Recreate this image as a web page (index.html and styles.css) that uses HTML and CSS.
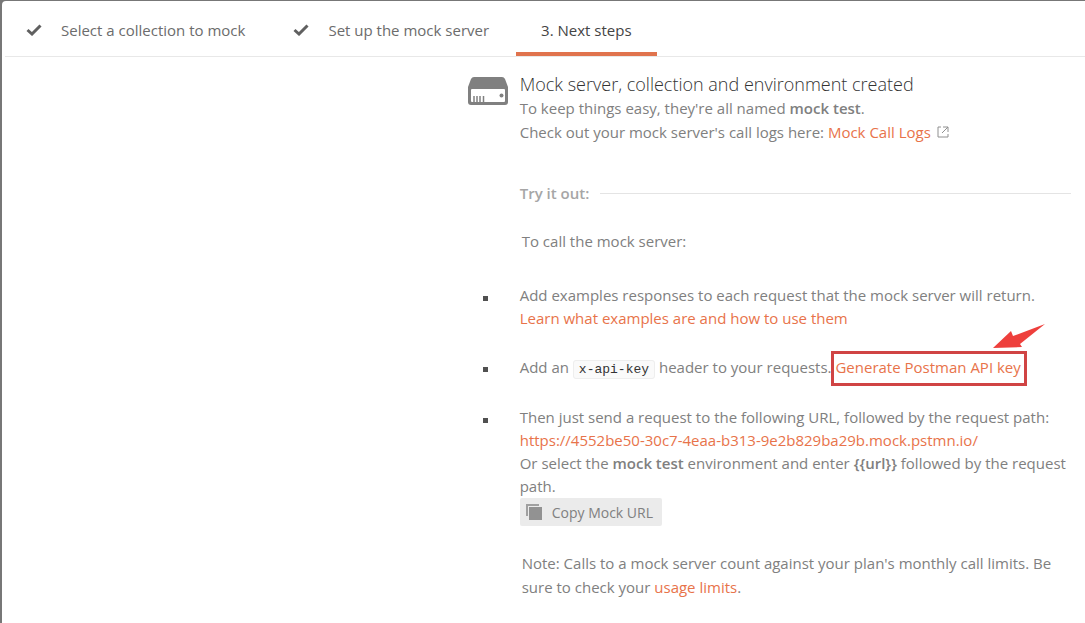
FILE: index.html
```html
<!DOCTYPE html>
<html lang="en">
<head>
    <meta charset="UTF-8">
    <meta name="viewport" content="width=device-width, initial-scale=1.0">
    <title>Create a mock server</title>
    <link rel="stylesheet" href="styles.css">
</head>
<body>
    <div class="modal">
        <nav class="steps">
            <a class="step" href="#collection">
                <svg class="check" viewBox="0 0 16 12"><path d="M1.5 6 L6 10 L14.5 1.5" /></svg>
                Select a collection to mock
            </a>
            <a class="step" href="#setup">
                <svg class="check" viewBox="0 0 16 12"><path d="M1.5 6 L6 10 L14.5 1.5" /></svg>
                Set up the mock server
            </a>
            <a class="step active" href="#next">3. Next steps</a>
        </nav>

        <main class="content">
            <section class="summary">
                <svg class="server-icon" viewBox="0 0 40 28">
                    <path d="M6 0H34Q36 0 37 2L40 10V25Q40 28 37 28H3Q0 28 0 25V10L3 2Q4 0 6 0Z" fill="#808080" />
                    <rect x="3" y="12" width="34" height="13" rx="1" fill="#fff" />
                    <path d="M6 19V26M9 19V26M12 19V26M15.500 19V26" stroke="#808080" stroke-width="1.500" />
                    <circle cx="33.500" cy="18.500" r="2" fill="#808080" />
                </svg>
                <div>
                    <h1>Mock server, collection and environment created</h1>
                    <p>To keep things easy, they're all named <strong>mock test</strong>.</p>
                    <p>Check out your mock server's call logs here: <a href="#logs">Mock Call Logs
                        <svg class="external" viewBox="0 0 12 12"><path d="M4 1H1V11H11V8M6 1H11V6M11 1L5 7" /></svg></a></p>
                </div>
            </section>

            <h2 class="divider">Try it out:</h2>
            <p class="intro">To call the mock server:</p>

            <ul class="instructions">
                <li>
                    Add examples responses to each request that the mock server will return.<br>
                    <a href="#examples">Learn what examples are and how to use them</a>
                </li>
                <li>
                    Add an <code>x-api-key</code> header to your requests.
                    <span class="highlight">
                        <a href="#api-key">Generate Postman API key</a>
                        <svg class="arrow" viewBox="0 0 54 26"><path d="M53 1L28 21L30 24L1 25L19 8L21 13Z" /></svg>
                    </span>
                </li>
                <li>
                    Then just send a request to the following URL, followed by the request path:<br>
                    <a href="#url">https://4552be50-30c7-4eaa-b313-9e2b829ba29b.mock.pstmn.io/</a><br>
                    Or select the <strong>mock test</strong> environment and enter <strong>{{url}}</strong> followed by the request path.
                    <button class="copy" type="button">
                        <svg class="copy-icon" viewBox="0 0 16 16"><path d="M1 12V1H13" fill="none" stroke="#a0a0a0" stroke-width="2" /><rect x="3" y="3" width="13" height="13" fill="#929292" /></svg>
                        Copy Mock URL
                    </button>
                </li>
            </ul>

            <p class="note">Note: Calls to a mock server count against your plan's monthly call limits. Be sure to check your <a href="#usage">usage limits</a>.</p>
        </main>
    </div>
</body>
</html>
```
FILE: styles.css
```css
* {
    box-sizing: border-box;
}

body {
    margin: 0;
    padding: 1px 0 0 2px;
    background-color: #777;
    color: #808080;
    font-family: "Open Sans", sans-serif;
    font-size: 15px;
    line-height: 24px;
}

.modal {
    min-height: calc(100vh - 1px);
    background-color: #fff;
    border-top-left-radius: 4px;
}

h1, h2, p, ul {
    margin: 0;
    padding: 0;
}

a {
    color: #e8734a;
    text-decoration: none;
}

strong {
    font-weight: 600;
}

.steps {
    display: flex;
    height: 56px;
    margin-left: 3px;
    border-bottom: 1px solid #e8e8e8;
}

.step {
    display: flex;
    align-items: center;
    gap: 19px;
    padding: 2px 27px 0 21px;
    color: #6c6c6c;
}

.step.active {
    padding: 6px 25px 0;
    border-bottom: 4px solid #e0734d;
    color: #444;
}

.check {
    width: 16px;
    height: 12px;
    fill: none;
    stroke: #606060;
    stroke-width: 3;
}

.content {
    margin-left: 43%;
    padding: 15px 14px 20px 0;
}

.summary {
    display: flex;
    gap: 12px;
}

.server-icon {
    flex: none;
    width: 40px;
    height: 28px;
    margin-top: 5px;
}

h1 {
    color: #333;
    font-size: 18px;
    font-weight: 300;
}

.external {
    width: 12px;
    height: 12px;
    margin-left: 2px;
    fill: none;
    stroke: #909090;
}

.divider {
    display: flex;
    align-items: center;
    gap: 11px;
    margin: 37px 0 24px 52px;
    color: #a6a6a6;
    font-size: 15px;
    font-weight: 600;
}

.divider::after {
    content: "";
    flex: 1;
    border-top: 1px solid #e4e4e4;
}

.intro,
.note {
    margin-left: 54px;
}

.instructions {
    display: flex;
    flex-direction: column;
    gap: 25px;
    margin: 31px 0 25px 52px;
    line-height: 23px;
    list-style: none;
}

/* square bullets, set further left than the browser's own */
.instructions li {
    position: relative;
}

.instructions li::before {
    content: "";
    position: absolute;
    top: 12px;
    left: -37px;
    width: 5px;
    height: 5px;
    background-color: #505050;
}

code {
    padding: 1px 5px;
    border: 1px solid #eee;
    border-radius: 3px;
    background-color: #fafafa;
    color: #333;
    font-family: "Liberation Mono", monospace;
    font-size: 13px;
}

.highlight {
    position: relative;
    display: inline-block;
    margin: -4px 0 -9px -4px;
    padding: 2px 3px 4px 1px;
    border: 3px solid #d04444;
}

.arrow {
    position: absolute;
    right: -22px;
    bottom: 34px;
    width: 54px;
    height: 26px;
    fill: #ee3f3c;
}

.copy {
    display: flex;
    align-items: center;
    gap: 10px;
    height: 28px;
    padding: 0 9px 0 6px;
    border: none;
    border-radius: 2px;
    background-color: #ebebeb;
    color: #808080;
    font-family: inherit;
    font-size: 14px;
}

.copy-icon {
    width: 16px;
    height: 16px;
}
```
